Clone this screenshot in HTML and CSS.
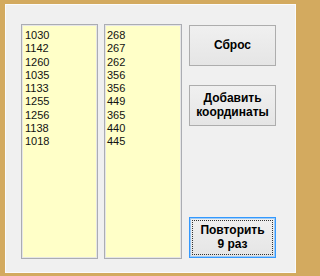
FILE: index.html
```html
<!DOCTYPE html>
<html>
<head>
<meta charset="utf-8">
<link rel="stylesheet" href="styles.css">
</head>
<body>
<div class="frame">
  <div class="client">
    <div class="list list-a">
      <div>1030</div><div>1142</div><div>1260</div><div>1035</div><div>1133</div><div>1255</div><div>1256</div><div>1138</div><div>1018</div>
    </div>
    <div class="list list-b">
      <div>268</div><div>267</div><div>262</div><div>356</div><div>356</div><div>449</div><div>365</div><div>440</div><div>445</div>
    </div>
    <div class="buttons">
      <div class="btn">Сброс</div>
      <div class="btn btn-second">Добавить<br>координаты</div>
      <div class="spacer"></div>
      <div class="btn btn-default"><span class="focus">Повторить<br>9 раз</span></div>
    </div>
  </div>
</div>
</body>
</html>
```

FILE: styles.css
```css
html, body {
  margin: 0;
  padding: 0;
  background: #d3aa5f;
}
.frame {
  width: 300px;
  height: 276px;
  box-sizing: border-box;
  border-style: solid;
  border-color: #d3aa5f;
  border-width: 4px 4px 3px 5px;
}
.client {
  box-sizing: border-box;
  height: 100%;
  border: 1px solid #fbfbfb;
  background: #f0f0f0;
  display: flex;
  align-items: flex-start;
  padding: 19px 0 0 15px;
  font-family: "Liberation Sans", Arial, sans-serif;
  color: #000;
}
.list {
  box-sizing: border-box;
  height: 235px;
  background: #ffffc8;
  border: 1px solid #abadb3;
  box-shadow: inset 0 0 0 1px #e6e6e6;
  padding: 4px 3px 2px;
  font-size: 11px;
  line-height: 13.25px;
  color: #111;
}
.list-a {
  width: 77px;
}
.list-b {
  width: 78px;
  margin-left: 6px;
  padding-left: 2px;
}
.buttons {
  margin-left: 7px;
  width: 87px;
  height: 233px;
  margin-top: 1px;
  display: flex;
  flex-direction: column;
}
.spacer {
  flex: 1;
}
.btn {
  box-sizing: border-box;
  height: 41px;
  border: 1px solid #adadad;
  background: linear-gradient(#f0f0f0, #e5e5e5);
  display: flex;
  align-items: center;
  justify-content: center;
  text-align: center;
  font-weight: bold;
  font-size: 12px;
  line-height: 13.3px;
}
.btn-second {
  margin-top: 19px;
}
.btn-default {
  border-color: #3399ff;
  box-shadow: inset 0 0 0 1px #9fcbf5;
  padding: 2px;
  align-items: stretch;
}
.focus {
  flex: 1;
  border: 1px dotted #333;
  display: flex;
  align-items: center;
  justify-content: center;
}
```
